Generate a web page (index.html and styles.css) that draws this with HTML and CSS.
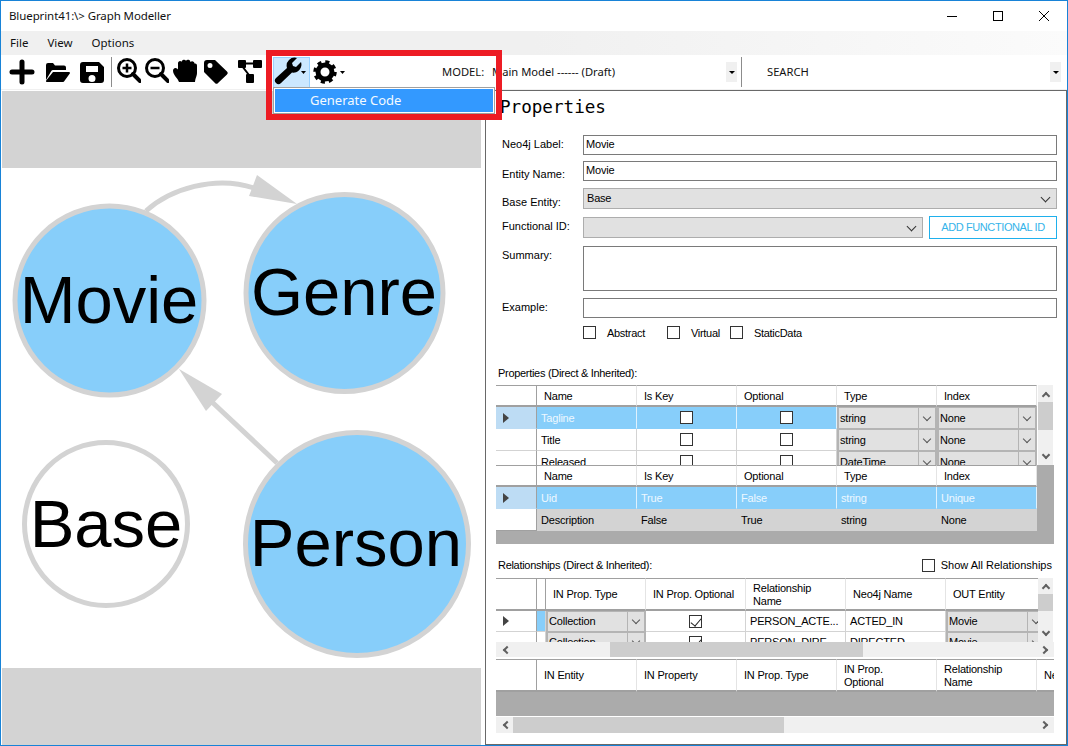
FILE: index.html
```html
<!DOCTYPE html>
<html lang="en">
<head>
    <meta charset="UTF-8">
    <meta name="viewport" content="width=device-width, initial-scale=1.0">
    <title>Blueprint41 Graph Modeller</title>
    <link rel="stylesheet" href="styles.css">
</head>
<body>
<div class="window">
    <div class="titlebar">
        <span class="title-text">Blueprint41:\&gt; Graph Modeller</span>
        <div class="win-buttons">
            <span class="win-btn"><i class="win-min"></i></span>
            <span class="win-btn"><i class="win-max"></i></span>
            <span class="win-btn">
                <svg width="12" height="12" viewBox="0 0 12 12"><path d="M1 1l10 10M11 1L1 11" stroke="#000" stroke-width="1" fill="none"/></svg>
            </span>
        </div>
    </div>

    <div class="menubar">
        <span class="menu-item">File</span>
        <span class="menu-item">View</span>
        <span class="menu-item">Options</span>
    </div>

    <div class="toolbar">
        <svg class="tool" width="35" height="34" viewBox="5 55 35 34"><path d="M12 69.500h7.500V62a2.500 2.500 0 0 1 5 0v7.500H32a2.500 2.500 0 0 1 0 5h-7.500V82a2.500 2.500 0 0 1-5 0v-7.500H12a2.500 2.500 0 0 1 0-5z"/></svg>
        <svg class="tool" width="35" height="34" viewBox="40 55 35 34"><path d="M46 80V65a2 2 0 0 1 2-2h5l2 2.500h9a2 2 0 0 1 2 2V70H53a2 2 0 0 0-1.700 1z"/><path d="M53 72h16a1 1 0 0 1 .8 1.600L64 81.500a1 1 0 0 1-.8.5H47a1 1 0 0 1-.8-1.600z"/></svg>
        <svg class="tool" width="35" height="34" viewBox="75 55 35 34"><path fill-rule="evenodd" d="M83 62h16l5 5v13a3 3 0 0 1-3 3H83a3 3 0 0 1-3-3V65a3 3 0 0 1 3-3zm3 4v6h12v-6zm6 9a3.500 3.500 0 1 0 0 7 3.500 3.500 0 0 0 0-7z"/></svg>
        <i class="tool-sep"></i>
        <svg class="tool" width="28" height="34" viewBox="113 55 28 34"><circle cx="127" cy="68" r="8.500" fill="none" stroke="#000" stroke-width="3"/><path d="M133 74l7 7" stroke="#000" stroke-width="4" stroke-linecap="round"/><path d="M122.500 68h9M127 63.500v9" stroke="#000" stroke-width="2.500"/></svg>
        <svg class="tool" width="28" height="34" viewBox="141 55 28 34"><circle cx="155" cy="68" r="8.500" fill="none" stroke="#000" stroke-width="3"/><path d="M161 74l7 7" stroke="#000" stroke-width="4" stroke-linecap="round"/><path d="M150.500 68h9" stroke="#000" stroke-width="2.500"/></svg>
        <svg class="tool" width="31" height="34" viewBox="169 55 31 34"><path d="M173 70.500a2.500 2.500 0 0 1 4-2l1 1V63a2 2 0 0 1 3.500-1.300A2.500 2.500 0 0 1 186 60.800a2.500 2.500 0 0 1 4.500 1.200 2.300 2.300 0 0 1 4 1.500h.3a2 2 0 0 1 2.200 2v7.500c0 3-1.500 4.500-2 9H179c-1-3.500-6-7-6-11.500z"/></svg>
        <svg class="tool" width="32" height="34" viewBox="200 55 32 34"><path fill-rule="evenodd" d="M207 60h8l12 11.500a2 2 0 0 1 0 3L218 83a2 2 0 0 1-3 0l-11-11v-9a3 3 0 0 1 3-3zm3 3a2.500 2.500 0 1 0 0 5 2.500 2.500 0 0 0 0-5z"/></svg>
        <svg class="tool" width="34" height="34" viewBox="232 55 34 34"><rect x="238" y="60" width="8" height="8" rx="1"/><rect x="253" y="60" width="9" height="8" rx="1"/><rect x="246" y="74" width="8" height="9" rx="1"/><path d="M244 63.500h11M242 66l7 9" stroke="#000" stroke-width="2" fill="none"/></svg>
        <i class="tool-gap"></i>
        <span class="tool-btn active">
            <svg width="35" height="30" viewBox="274 56 35 30"><path d="M301 61l-5 5-3-1-1-3 5-5a8 8 0 0 0-10 10L276 77a3.500 3.500 0 0 0 5 5L292 71.500a8 8 0 0 0 9-10.500z"/><path d="M301 70h5l-2.500 3z"/></svg>
        </span>
        <span class="tool-btn">
            <svg width="36" height="30" viewBox="309 56 36 30"><circle cx="323" cy="71" r="7" fill="none" stroke="#000" stroke-width="5"/><circle cx="323" cy="71" r="10" fill="none" stroke="#000" stroke-width="3.500" stroke-dasharray="4 3.850"/><path d="M338 70h5l-2.500 3z"/></svg>
        </span>
        <span class="combo-label model-label">MODEL:</span>
        <span class="combo-label model-value">Main Model ------ (Draft)</span>
        <span class="drop-btn"><i class="caret"></i></span>
        <i class="combo-sep"></i>
        <span class="combo-label search-label">SEARCH</span>
        <span class="drop-btn"><i class="caret"></i></span>
    </div>

    <div class="main">
        <div class="canvas">
            <div class="band"></div>
            <svg class="graph" width="479" height="500" viewBox="2 167 479 500">
                <path class="edge" d="M146 210C170 188 215 174 254 187"/>
                <path class="arrow" d="M297 203L257 174L249 195z"/>
                <path class="edge" d="M277 462L212 401"/>
                <path class="arrow" d="M179 368L222 393L206 410z"/>
                <circle class="node" cx="109.500" cy="299.500" r="94.500"/>
                <text x="109" y="322">Movie</text>
                <circle class="node" cx="344.500" cy="292" r="98.500"/>
                <text x="344" y="314">Genre</text>
                <circle class="node plain" cx="106" cy="523" r="81.500"/>
                <text x="106" y="546">Base</text>
                <circle class="node" cx="357" cy="543" r="111.500"/>
                <text x="356" y="565">Person</text>
            </svg>
            <div class="band"></div>
        </div>

        <div class="panel">
            <h1 class="panel-title">Properties</h1>
            <div class="form">
                <div class="form-row h20 gap6">
                    <label class="pad3">Neo4j Label:</label>
                    <div class="input">Movie</div>
                </div>
                <div class="form-row h20 gap7">
                    <label class="pad7">Entity Name:</label>
                    <div class="input">Movie</div>
                </div>
                <div class="form-row h21 gap8">
                    <label class="pad8">Base Entity:</label>
                    <div class="select">Base<i class="chev"></i></div>
                </div>
                <div class="form-row h21 gap8">
                    <label class="pad3">Functional ID:</label>
                    <div class="select"><i class="chev"></i></div>
                    <button class="add-btn" type="button">ADD FUNCTIONAL ID</button>
                </div>
                <div class="form-row h45 gap7">
                    <label class="pad3">Summary:</label>
                    <div class="input"></div>
                </div>
                <div class="form-row h20 gap8">
                    <label class="pad3">Example:</label>
                    <div class="input"></div>
                </div>
                <div class="check-row">
                    <span class="check check-a"><i class="box"></i>Abstract</span>
                    <span class="check check-b"><i class="box"></i>Virtual</span>
                    <span class="check"><i class="box"></i>StaticData</span>
                </div>
            </div>

            <div class="grids">
                <div class="section-head first">Properties (Direct &amp; Inherited):</div>

                <div class="grid grid-props">
                    <div class="grid-body">
                        <table class="dg">
                            <colgroup><col class="c-head"><col><col><col><col><col></colgroup>
                            <tr class="dg-head"><th></th><th>Name</th><th>Is Key</th><th>Optional</th><th>Type</th><th>Index</th></tr>
                            <tr class="selected">
                                <td class="row-head"><i class="row-arrow"></i></td><td>Tagline</td>
                                <td class="center"><i class="box"></i></td><td class="center"><i class="box"></i></td>
                                <td class="combo-cell"><div class="cell-combo"><span>string</span><b><i class="chev small"></i></b></div></td>
                                <td class="combo-cell"><div class="cell-combo"><span>None</span><b><i class="chev small"></i></b></div></td>
                            </tr>
                            <tr>
                                <td class="row-head"></td><td>Title</td>
                                <td class="center"><i class="box"></i></td><td class="center"><i class="box"></i></td>
                                <td class="combo-cell"><div class="cell-combo"><span>string</span><b><i class="chev small"></i></b></div></td>
                                <td class="combo-cell"><div class="cell-combo"><span>None</span><b><i class="chev small"></i></b></div></td>
                            </tr>
                            <tr>
                                <td class="row-head"></td><td>Released</td>
                                <td class="center"><i class="box"></i></td><td class="center"><i class="box"></i></td>
                                <td class="combo-cell"><div class="cell-combo"><span>DateTime</span><b><i class="chev small"></i></b></div></td>
                                <td class="combo-cell"><div class="cell-combo"><span>None</span><b><i class="chev small"></i></b></div></td>
                            </tr>
                        </table>
                    </div>
                    <div class="vscroll vscroll-props">
                        <span class="sb-arrow"><i class="arr up"></i></span>
                        <div class="sb-track"><i class="sb-thumb"></i></div>
                        <span class="sb-arrow"><i class="arr down"></i></span>
                    </div>
                </div>

                <div class="grid grid-inherited">
                    <table class="dg">
                        <colgroup><col class="c-head"><col><col><col><col><col></colgroup>
                        <tr class="dg-head"><th></th><th>Name</th><th>Is Key</th><th>Optional</th><th>Type</th><th>Index</th></tr>
                        <tr class="selected"><td class="row-head"><i class="row-arrow"></i></td><td>Uid</td><td>True</td><td>False</td><td>string</td><td>Unique</td></tr>
                        <tr class="dimmed"><td class="row-head"></td><td>Description</td><td>False</td><td>True</td><td>string</td><td>None</td></tr>
                    </table>
                </div>

                <div class="section-head second">
                    <span>Relationships (Direct &amp; Inherited):</span>
                    <span class="check show-all"><i class="box"></i>Show All Relationships</span>
                </div>

                <div class="grid grid-rels">
                    <div class="grid-body">
                        <table class="dg dg-rels">
                            <colgroup><col class="c-head"><col class="c-mark"><col><col><col><col><col></colgroup>
                            <tr class="dg-head tall">
                                <th></th><th></th><th>IN Prop. Type</th><th>IN Prop. Optional</th><th>Relationship<br>Name</th><th>Neo4j Name</th><th>OUT Entity</th>
                            </tr>
                            <tr>
                                <td class="row-head"><i class="row-arrow"></i></td><td class="mark"></td>
                                <td class="combo-cell"><div class="cell-combo"><span>Collection</span><b><i class="chev small"></i></b></div></td>
                                <td class="center"><i class="box checked"></i></td>
                                <td>PERSON_ACTE...</td><td>ACTED_IN</td>
                                <td class="combo-cell"><div class="cell-combo"><span>Movie</span><b><i class="chev small"></i></b></div></td>
                            </tr>
                            <tr>
                                <td class="row-head"></td><td></td>
                                <td class="combo-cell"><div class="cell-combo"><span>Collection</span><b><i class="chev small"></i></b></div></td>
                                <td class="center"><i class="box checked"></i></td>
                                <td>PERSON_DIRE...</td><td>DIRECTED</td>
                                <td class="combo-cell"><div class="cell-combo"><span>Movie</span><b><i class="chev small"></i></b></div></td>
                            </tr>
                        </table>
                    </div>
                    <div class="vscroll vscroll-rels">
                        <span class="sb-arrow"><i class="arr up"></i></span>
                        <div class="sb-track"><i class="sb-thumb"></i></div>
                        <span class="sb-arrow"><i class="arr down"></i></span>
                    </div>
                </div>
                <div class="hscroll hscroll-rels">
                    <span class="sb-arrow"><i class="arr left"></i></span>
                    <div class="sb-track"><i class="sb-thumb"></i></div>
                    <span class="sb-arrow"><i class="arr right"></i></span>
                </div>

                <div class="grid grid-out">
                    <table class="dg dg-out">
                        <colgroup><col class="c-head"><col><col><col><col><col><col></colgroup>
                        <tr class="dg-head tall">
                            <th></th><th>IN Entity</th><th>IN Property</th><th>IN Prop. Type</th><th>IN Prop.<br>Optional</th><th>Relationship<br>Name</th><th>Neo4j Name</th>
                        </tr>
                    </table>
                </div>
                <div class="hscroll hscroll-out">
                    <span class="sb-arrow"><i class="arr left"></i></span>
                    <div class="sb-track"><i class="sb-thumb"></i></div>
                    <span class="sb-arrow"><i class="arr right"></i></span>
                </div>
            </div>
        </div>
    </div>

    <!-- open menu and the red callout lie over the toolbar and canvas -->
    <div class="dropdown"><div class="dropdown-item">Generate Code</div></div>
    <div class="callout"></div>
</div>
</body>
</html>
```

FILE: styles.css
```css
* {
    box-sizing: border-box;
}

body {
    margin: 0;
    font-family: "Liberation Sans", Arial, sans-serif;
    font-size: 11px;
    color: #000;
    background-color: #fff;
}

i, b {
    font-style: normal;
    font-weight: normal;
}

/* Window frame */
.window {
    position: relative;
    width: 1068px;
    height: 746px;
    display: flex;
    flex-direction: column;
    border: 1px solid #1883d7;
    overflow: hidden;
    background-color: #fff;
}

.titlebar {
    flex: 0 0 30px;
    display: flex;
    align-items: center;
    padding-left: 8px;
    font-family: "Noto Sans", sans-serif;
    font-size: 11.5px;
    color: #111;
}

.title-text {
    margin-bottom: 2px;
    letter-spacing: -0.1px;
}

.win-buttons {
    display: flex;
    margin-left: auto;
}

.win-btn {
    width: 46px;
    height: 30px;
    display: flex;
    align-items: center;
    justify-content: center;
}

.win-min {
    width: 10px;
    height: 1px;
    background-color: #000;
}

.win-max {
    width: 10px;
    height: 10px;
    border: 1px solid #000;
}

.menubar {
    flex: 0 0 24px;
    display: flex;
    align-items: center;
    padding: 0 0 2px 9px;
    gap: 19px;
    font-family: "Noto Sans", sans-serif;
    font-size: 11.5px;
    color: #111;
    background: linear-gradient(to right, #f0f0f0, #f0f0f0 50%, #fbfbfb);
}

/* Toolbar */
.toolbar {
    flex: 0 0 34px;
    display: flex;
    align-items: center;
    padding-left: 4px;
    border-bottom: 1px solid #f0f0f0;
    font-family: "Noto Sans", sans-serif;
    font-size: 11.2px;
    color: #111;
}

.tool {
    display: block;
    flex: none;
}

.tool-sep {
    flex: 0 0 1px;
    height: 30px;
    margin: 0 1px;
    background-color: #8c8c8c;
}

.tool-gap {
    flex: 0 0 7px;
}

.tool-btn {
    flex: none;
    display: flex;
    height: 31px;
    align-items: center;
    border: 1px solid transparent;
}

.tool-btn svg {
    display: block;
}

.tool-btn.active {
    background-color: #cce8ff;
    border-color: #99d1ff;
}

.combo-label {
    flex: none;
    margin-bottom: 2px;
}

.model-label {
    margin-left: 94px;
    width: 50px;
}

.model-value {
    width: 235px;
}

.search-label {
    width: 284px;
    margin-left: 25px;
}

.drop-btn {
    flex: none;
    width: 11px;
    height: 20px;
    margin-left: -1px;
    display: flex;
    align-items: center;
    justify-content: center;
    background-color: #f0f0f0;
}

.caret {
    width: 0;
    height: 0;
    border-style: solid;
    border-width: 3px 3.5px 0;
    border-color: #000 transparent transparent;
}

.combo-sep {
    flex: 0 0 1px;
    height: 30px;
    margin-left: 4px;
    background-color: #8c8c8c;
}

/* Main split */
.main {
    flex: 1;
    min-height: 0;
    display: flex;
}

.canvas {
    flex: 0 0 484px;
    padding: 1px 4px 0 1px;
    display: flex;
    flex-direction: column;
}

.band {
    flex: 0 0 77px;
    background-color: #d3d3d3;
}

.band:last-child {
    flex-basis: 78px;
}

.graph {
    display: block;
    flex: none;
}

.graph text {
    font-family: "Liberation Sans", Arial, sans-serif;
    font-size: 67px;
    text-anchor: middle;
}

.node {
    fill: #87cefa;
    stroke: #d3d3d3;
    stroke-width: 5;
}

.node.plain {
    fill: #fff;
}

.edge {
    fill: none;
    stroke: #d3d3d3;
    stroke-width: 5;
}

.arrow {
    fill: #d3d3d3;
}

.panel {
    flex: 1;
    min-width: 0;
    border: 1px solid #696969;
}

.panel-title {
    margin: 0;
    height: 44px;
    padding: 4px 0 0 14px;
    font-family: "DejaVu Sans Mono", monospace;
    font-size: 17.6px;
    font-weight: normal;
    line-height: 24px;
}

/* Form */
.form {
    margin: 0 9px 0 16px;
}

.form-row {
    display: flex;
}

.h20 { height: 20px; }
.h21 { height: 21px; }
.h45 { height: 45px; }
.gap6 { margin-bottom: 6px; }
.gap7 { margin-bottom: 7px; }
.gap8 { margin-bottom: 8px; }
.pad3 { padding-top: 3px; }
.pad7 { padding-top: 7px; }
.pad8 { padding-top: 8px; }

.form-row label {
    flex: 0 0 81px;
    line-height: 13px;
}

.input {
    flex: 1;
    padding: 2px;
    border: 1px solid #7a7a7a;
    line-height: 13px;
    letter-spacing: -0.2px;
}

.select {
    flex: 1;
    display: flex;
    align-items: center;
    justify-content: space-between;
    padding: 0 5px 2px 3px;
    border: 1px solid #adadad;
    background-color: #e1e1e1;
    letter-spacing: -0.2px;
}

.chev {
    width: 7px;
    height: 7px;
    margin: 0 2px 1px auto;
    border-right: 1px solid #333;
    border-bottom: 1px solid #333;
    transform: rotate(45deg);
}

.chev.small {
    width: 6px;
    height: 6px;
    margin: 0 0 3px;
    border-color: #555;
}

.add-btn {
    flex: 0 0 128px;
    height: 23px;
    margin: -1px 0 0 6px;
    padding: 0 0 2px;
    border: 1px solid #1fb0ec;
    background-color: #fff;
    color: #35b4ea;
    font-family: "Liberation Sans", Arial, sans-serif;
    font-size: 11px;
    letter-spacing: -0.4px;
}

.check-row {
    display: flex;
    margin-left: 81px;
}

.check {
    display: inline-flex;
    align-items: center;
    letter-spacing: -0.3px;
    line-height: 13px;
}

.check-row .check {
    line-height: 15px;
    align-items: flex-end;
    height: 15px;
}

.check-a {
    width: 84px;
}

.check-b {
    width: 63px;
}

.box {
    display: inline-block;
    position: relative;
    width: 13px;
    height: 13px;
    border: 1px solid #333;
    background-color: #fff;
    flex: none;
}

.check-row .box {
    align-self: flex-start;
}

.check .box {
    margin-right: 11px;
}

/* tick on a checked cell */
.box.checked::after {
    content: "";
    position: absolute;
    left: 3px;
    top: 0;
    width: 5px;
    height: 9px;
    border-right: 1px solid #222;
    border-bottom: 1px solid #222;
    transform: rotate(40deg);
}

/* Data grids */
.grids {
    margin-left: 10px;
    width: 558px;
}

.section-head {
    display: flex;
    align-items: flex-end;
    justify-content: space-between;
    padding: 0 2px 5px;
    line-height: 13px;
    letter-spacing: -0.3px;
}

.section-head.first {
    height: 44px;
}

.section-head.second {
    height: 34px;
    padding-bottom: 6px;
}

.check.show-all {
    letter-spacing: 0;
}

.show-all .box {
    margin-right: 6px;
}

.grid {
    display: flex;
    align-items: flex-start;
    overflow: hidden;
}

.grid-body {
    flex: 0 0 542px;
    overflow: hidden;
    align-self: stretch;
}

.grid-props {
    height: 80px;
}

.grid-inherited {
    height: 79px;
    background-color: #ababab;
}

.grid-rels {
    height: 64px;
}

.grid-out {
    height: 57px;
    margin-top: 2px;
    background-color: #ababab;
}

.dg {
    flex: none;
    width: 541px;
    table-layout: fixed;
    border-collapse: separate;
    border-spacing: 0;
    line-height: 13px;
    letter-spacing: -0.2px;
}

.dg-rels {
    width: 550px;
}

.dg-out {
    width: 641px;
}

.c-head {
    width: 41px;
}

.c-mark {
    width: 9px;
}

.dg th {
    height: 22px;
    padding: 1px 0 0 7px;
    text-align: left;
    font-weight: normal;
    background-color: #fff;
    border-top: 1px solid #a0a0a0;
    border-right: 1px solid #e4e4e4;
    border-bottom: 2px solid #a0a0a0;
}

.dg th:first-child {
    border-right: 1px solid #a0a0a0;
}

.dg-head.tall th {
    height: 33px;
}

.dg-head.tall th:nth-child(2):empty {
    border-right-color: #a0a0a0;
}

.dg td {
    height: 22px;
    padding: 1px 0 0 4px;
    overflow: hidden;
    white-space: nowrap;
    background-color: #fff;
    border-right: 1px solid #d3d3d3;
    border-bottom: 1px solid #d3d3d3;
}

.dg-rels td {
    height: 21px;
    padding-top: 0;
}

.dg-rels .cell-combo {
    height: 21px;
}

.dg-rels .cell-combo span {
    line-height: 19px;
}

.dg td.row-head {
    padding: 0 0 0 7px;
    border-right: 1px solid #a0a0a0;
}

.row-arrow {
    display: block;
    width: 0;
    height: 0;
    border-style: solid;
    border-width: 5px 0 5px 6px;
    border-color: transparent transparent transparent #444;
}

.selected td {
    background-color: #87cefa;
    color: #eef8ff;
    border-right-color: #dff1fd;
    border-bottom-color: #87cefa;
}

.dg .selected td.row-head {
    background-color: #bddcf4;
    border-bottom-color: #bddcf4;
}

.dimmed td {
    background-color: #d3d3d3;
    border-color: #d3d3d3;
}

.dg .dimmed td.row-head {
    background-color: #fff;
    border-right-color: #a0a0a0;
    border-bottom-color: #a0a0a0;
}

.dg td.mark {
    background-color: #87cefa;
    padding: 0;
}

.dg td.center {
    padding: 0;
    text-align: center;
}

.dg td.center .box {
    display: block;
    margin: 0 auto;
}

.dg td.combo-cell {
    padding: 0;
    border: none;
}

.cell-combo {
    display: flex;
    height: 22px;
    border: solid #b4b4b4;
    border-width: 1px 2px;
    background-color: #e1e1e1;
    color: #000;
}

.cell-combo span {
    flex: 1;
    padding-left: 1px;
    line-height: 20px;
}

.cell-combo b {
    flex: 0 0 17px;
    display: flex;
    align-items: center;
    justify-content: center;
    border-left: 1px solid #b4b4b4;
}

/* Scrollbars */
.vscroll {
    flex: 0 0 15px;
    align-self: stretch;
    display: flex;
    flex-direction: column;
    background-color: #f0f0f0;
}

.hscroll {
    display: flex;
    background-color: #f0f0f0;
}

.hscroll-rels {
    height: 15px;
}

.hscroll-out {
    height: 16px;
    margin-top: 1px;
}

.sb-arrow {
    flex: 0 0 17px;
    display: flex;
    align-items: center;
    justify-content: center;
}

.sb-track {
    flex: 1;
    display: flex;
    min-width: 0;
    min-height: 0;
}

.vscroll .sb-track {
    flex-direction: column;
}

.sb-thumb {
    display: block;
    background-color: #cdcdcd;
}

.vscroll-props .sb-thumb {
    height: 28px;
}

.vscroll-rels .sb-thumb {
    height: 17px;
}

.vscroll-rels .sb-arrow {
    flex-basis: 16px;
}

.hscroll-rels .sb-thumb {
    width: 253px;
    margin-left: 97px;
}

.hscroll-out .sb-thumb {
    width: 271px;
}

.arr {
    width: 6px;
    height: 6px;
    border-right: 2px solid #606060;
    border-bottom: 2px solid #606060;
}

.arr.up { transform: rotate(-135deg); margin-top: 4px; }
.arr.down { transform: rotate(45deg); margin-bottom: 4px; }
.arr.left { transform: rotate(135deg); margin-left: 4px; }
.arr.right { transform: rotate(-45deg); margin-right: 4px; }

/* Open menu over the toolbar */
.dropdown {
    position: absolute;
    left: 272px;
    top: 86px;
    width: 222px;
    height: 27px;
    padding: 1px;
    background-color: #fff;
    border: 1px solid #a0a0a0;
}

.dropdown-item {
    height: 100%;
    padding-left: 35px;
    background-color: #3399ff;
    color: #f4faff;
    font-family: "Noto Sans", sans-serif;
    font-size: 13px;
    line-height: 23px;
}

.callout {
    position: absolute;
    left: 265px;
    top: 49px;
    width: 236px;
    height: 70px;
    border: 6px solid #ed1c24;
    pointer-events: none;
}
```
